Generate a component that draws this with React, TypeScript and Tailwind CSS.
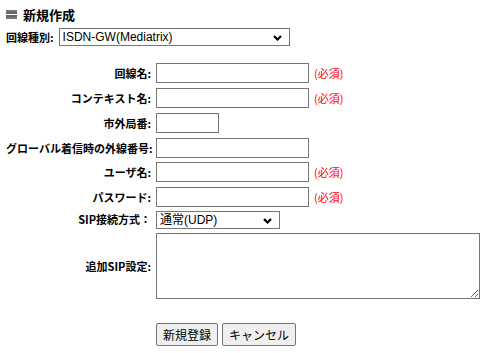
const labelFont = "font-['Noto_Sans_CJK_JP',sans-serif]";

function Required() {
  return <span className="ml-[5px] text-[11px] text-[#ff0000] leading-none whitespace-nowrap">(必須)</span>;
}

function Chevron() {
  return (
    <svg width="9" height="6" viewBox="0 0 9 6" className="absolute right-[7px] top-[6px]">
      <polyline points="1,1 4.5,4.5 8,1" fill="none" stroke="#000" strokeWidth="2.2" />
    </svg>
  );
}

function FakeSelect({ value, width }: { value: string; width: string }) {
  return (
    <div className={`relative h-[18px] ${width} border border-[#767676] bg-white flex items-center pl-[3px]`}>
      <span className="font-['Liberation_Sans','Noto_Sans_CJK_JP',sans-serif] text-[12px] leading-none text-black whitespace-nowrap">
        {value}
      </span>
      <Chevron />
    </div>
  );
}

function Row({ label, children, className = "" }: { label: string; children: React.ReactNode; className?: string }) {
  return (
    <div className={`flex items-center ${className}`}>
      <div className="w-[145px] text-right text-[11px] font-bold leading-none whitespace-nowrap text-black">{label}</div>
      <div className="ml-[5px] flex items-center">{children}</div>
    </div>
  );
}

const inputCls = "h-[20px] border border-[#767676] bg-white";

export default function App() {
  return (
    <div className={`w-[495px] h-[353px] bg-white px-[6px] ${labelFont} text-black`}>
      {/* Header */}
      <div className="h-[28px] flex items-center">
        <div className="w-[11px] h-[10px] flex flex-col justify-between mt-[1px]">
          <div className="h-[2px] bg-[#777]" />
          <div className="h-[2px] bg-[#666]" />
          <div className="h-[2px] bg-[#666]" />
          <div className="h-[2px] bg-[#777]" />
        </div>
        <span className="ml-[6px] text-[13px] font-bold leading-none">新規作成</span>
      </div>

      {/* Line type */}
      <div className="flex items-center h-[18px]">
        <span className="text-[11px] font-bold leading-none whitespace-nowrap">回線種別:</span>
        <div className="ml-[5px]">
          <FakeSelect value="ISDN-GW(Mediatrix)" width="w-[231px]" />
        </div>
      </div>

      {/* Form */}
      <div className="mt-[17px] flex flex-col">
        <Row label="回線名:" className="h-[20px]">
          <div className={`${inputCls} w-[153px]`} />
          <Required />
        </Row>
        <Row label="コンテキスト名:" className="h-[20px] mt-[5px]">
          <div className={`${inputCls} w-[153px]`} />
          <Required />
        </Row>
        <Row label="市外局番:" className="h-[20px] mt-[5px]">
          <div className={`${inputCls} w-[63px]`} />
        </Row>
        <Row label="グローバル着信時の外線番号:" className="h-[20px] mt-[5px]">
          <div className={`${inputCls} w-[153px]`} />
        </Row>
        <Row label="ユーザ名:" className="h-[20px] mt-[4px]">
          <div className={`${inputCls} w-[153px]`} />
          <Required />
        </Row>
        <Row label="パスワード:" className="h-[20px] mt-[5px]">
          <div className={`${inputCls} w-[153px]`} />
          <Required />
        </Row>
        <Row label="SIP接続方式：" className="h-[19px] mt-[3px]">
          <FakeSelect value="通常(UDP)" width="w-[124px]" />
        </Row>
        <Row label="追加SIP設定:" className="h-[66px] mt-[4px]">
          <textarea className="w-[324px] h-[66px] border border-[#767676] bg-white resize block" />
        </Row>

        <div className="mt-[24px] ml-[150px] flex gap-[4px]">
          <button className="h-[23px] px-[6px] border border-[#767676] rounded-[2px] bg-[#efefef] text-[12px] leading-none text-black">
            新規登録
          </button>
          <button className="h-[23px] px-[6px] border border-[#767676] rounded-[2px] bg-[#efefef] text-[12px] leading-none text-black">
            キャンセル
          </button>
        </div>
      </div>
    </div>
  );
}
